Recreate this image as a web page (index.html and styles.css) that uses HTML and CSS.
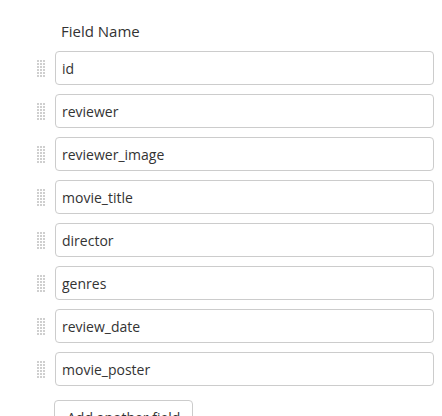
FILE: index.html
```html
<!DOCTYPE html>
<html>
<head>
<meta charset="utf-8">
<link rel="stylesheet" href="styles.css">
</head>
<body>
<div class="fields">
  <div class="header">Field Name</div>
  <div class="row"><span class="handle"></span><input class="field" type="text" value="id"></div>
  <div class="row"><span class="handle"></span><input class="field" type="text" value="reviewer"></div>
  <div class="row"><span class="handle"></span><input class="field" type="text" value="reviewer_image"></div>
  <div class="row"><span class="handle"></span><input class="field" type="text" value="movie_title"></div>
  <div class="row"><span class="handle"></span><input class="field" type="text" value="director"></div>
  <div class="row"><span class="handle"></span><input class="field" type="text" value="genres"></div>
  <div class="row"><span class="handle"></span><input class="field" type="text" value="review_date"></div>
  <div class="row"><span class="handle"></span><input class="field" type="text" value="movie_poster"></div>
  <div class="actions"><button class="add" type="button">Add another field</button></div>
</div>
</body>
</html>
```
FILE: styles.css
```css
html, body {
  margin: 0;
  padding: 0;
  background: #fff;
}
body {
  font-family: "Open Sans", sans-serif;
  font-size: 14px;
  color: #333;
  overflow: hidden;
}
.fields {
  padding: 21px 0 0 37px;
  width: 397px;
}
.header {
  font-size: 15px;
  line-height: 20px;
  padding-left: 24px;
  margin-bottom: 10px;
}
.row {
  display: flex;
  align-items: center;
  gap: 10px;
  margin-bottom: 9px;
}
.handle {
  width: 8px;
  height: 17px;
  flex: none;
  background:
    linear-gradient(90deg, transparent 2px, #fff 2px) 0 0 / 3px 3px,
    linear-gradient(180deg, transparent 2px, #fff 2px) 0 0 / 3px 3px,
    #cfcfcf;
}
.field {
  flex: 1;
  min-width: 0;
  box-sizing: border-box;
  height: 34px;
  margin: 0;
  padding: 6px 6px;
  border: 1px solid #ccc;
  border-radius: 4px;
  font-family: "Open Sans", sans-serif;
  font-size: 14px;
  color: #333;
  background: #fff;
  outline: none;
}
.actions {
  padding-left: 17px;
  padding-top: 5px;
}
.add {
  margin: 0;
  height: 34px;
  padding: 6px 12px;
  border: 1px solid #ccc;
  border-radius: 4px;
  background: #fff;
  font-family: "Open Sans", sans-serif;
  font-size: 14px;
  color: #333;
}
```
